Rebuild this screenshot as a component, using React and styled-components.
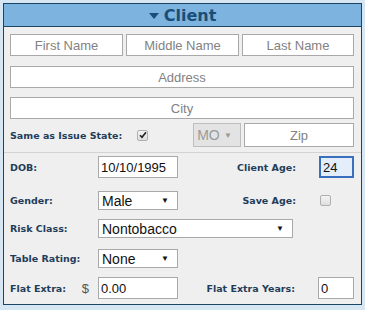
import React from "react";
import styled, { createGlobalStyle } from "styled-components";

const GlobalStyle = createGlobalStyle`
  html, body {
    margin: 0;
    padding: 0;
    background: #d7e6f3;
  }
  * {
    box-sizing: border-box;
  }
`;

function App() {
  return (
    <Page>
      <GlobalStyle />
      <Panel>
        <Header>
          <svg width="10" height="6" viewBox="0 0 10 6">
            <polygon points="0,0 10,0 5,6" fill="#1a4e78" />
          </svg>
          <span>Client</span>
        </Header>

        <TopSection>
          <NameRow>
            <TextBox placeholder="First Name" $center />
            <TextBox placeholder="Middle Name" $center />
            <TextBox placeholder="Last Name" $center />
          </NameRow>
          <TextBox placeholder="Address" $center $top={10} />
          <TextBox placeholder="City" $center $top={9} />
          <StateRow>
            <Label>Same as Issue State:</Label>
            <CheckBox $checked $left={15}>
              <svg width="8" height="8" viewBox="0 0 8 8">
                <path d="M1 4.2 L3 6.3 L7 1.3" stroke="#222" strokeWidth="1.6" fill="none" />
              </svg>
            </CheckBox>
            <SelectBox $width={48} $disabled $left={45}>
              <span>MO</span>
              <Arrow $disabled>▼</Arrow>
            </SelectBox>
            <TextBox placeholder="Zip" $center $width={110} $left={3} $height={24} />
          </StateRow>
        </TopSection>

        <BottomSection>
          <FieldRow $top={3}>
            <FieldLabel>DOB:</FieldLabel>
            <TextBox defaultValue="10/10/1995" $width={80} $value />
            <RightLabel>Client Age:</RightLabel>
            <TextBox defaultValue="24" $width={35} $value $focused />
          </FieldRow>
          <FieldRow $top={13}>
            <FieldLabel>Gender:</FieldLabel>
            <SelectBox $width={80}>
              <span>Male</span>
              <Arrow>▼</Arrow>
            </SelectBox>
            <RightLabel>Save Age:</RightLabel>
            <FieldSlot>
              <CheckBox $left={1} />
            </FieldSlot>
          </FieldRow>
          <FieldRow $top={9}>
            <FieldLabel>Risk Class:</FieldLabel>
            <SelectBox $width={195}>
              <span>Nontobacco</span>
              <Arrow>▼</Arrow>
            </SelectBox>
          </FieldRow>
          <FieldRow $top={11}>
            <FieldLabel>Table Rating:</FieldLabel>
            <SelectBox $width={80}>
              <span>None</span>
              <Arrow>▼</Arrow>
            </SelectBox>
          </FieldRow>
          <FieldRow $top={9}>
            <FieldLabel>
              Flat Extra:
              <Dollar>$</Dollar>
            </FieldLabel>
            <TextBox defaultValue="0.00" $width={80} $value />
            <RightLabel>Flat Extra Years:</RightLabel>
            <TextBox defaultValue="0" $width={36} $value />
          </FieldRow>
        </BottomSection>
      </Panel>
    </Page>
  );
}

const Page = styled.div`
  width: 365px;
  height: 310px;
  padding: 3px 0 0 3px;
`;

const Panel = styled.div`
  width: 359px;
  height: 302px;
  border: 1px solid #1b4565;
  background: #efefef;
`;

const Header = styled.div`
  display: flex;
  justify-content: center;
  align-items: center;
  gap: 5px;
  height: 23px;
  background: #7db3df;
  border-bottom: 1px solid #1b4565;
  font-family: "DejaVu Sans", Verdana, sans-serif;
  font-weight: bold;
  font-size: 16px;
  color: #1a4e78;

  svg {
    margin-top: 1px;
  }
`;

const TopSection = styled.div`
  display: flex;
  flex-direction: column;
  padding: 7px 7px 5px 6px;
`;

const NameRow = styled.div`
  display: grid;
  grid-template-columns: 113px 113px 112px;
  justify-content: space-between;
`;

const StateRow = styled.div`
  display: flex;
  align-items: center;
  margin-top: 4px;
`;

const BottomSection = styled.div`
  border-top: 1px solid #d3d3d3;
  padding: 0 7px 0 6px;
`;

const FieldRow = styled.div`
  display: flex;
  align-items: center;
  margin-top: ${(p) => p.$top}px;
`;

const Label = styled.span`
  font-family: "DejaVu Sans", Verdana, sans-serif;
  font-weight: bold;
  font-size: 9.5px;
  color: #1f3d5a;
  white-space: nowrap;
`;

const FieldLabel = styled(Label)`
  display: flex;
  align-items: center;
  width: 88px;
`;

const RightLabel = styled(Label)`
  margin-left: auto;
  margin-right: 23px;
  text-align: right;
`;

const Dollar = styled.span`
  margin-left: auto;
  margin-right: 9px;
  font-family: "Liberation Sans", Arial, sans-serif;
  font-weight: normal;
  font-size: 13px;
  color: #555;
`;

const FieldSlot = styled.div`
  width: 35px;
  display: flex;
`;

const TextBox = styled.input`
  display: block;
  width: ${(p) => (p.$width ? `${p.$width}px` : "100%")};
  height: ${(p) => p.$height || 22}px;
  margin-top: ${(p) => p.$top || 0}px;
  margin-left: ${(p) => p.$left || 0}px;
  padding: 0 2px;
  border: ${(p) => (p.$focused ? "2px solid #3a6fbe" : "1px solid #a9a9a9")};
  background: ${(p) => (p.$focused ? "#e4eefa" : "#fff")};
  font-family: "Liberation Sans", Arial, sans-serif;
  font-size: 13px;
  color: #111;
  text-align: ${(p) => (p.$center ? "center" : "left")};
  outline: none;

  &::placeholder {
    color: #828282;
  }
`;

const SelectBox = styled.div`
  display: flex;
  align-items: center;
  justify-content: space-between;
  width: ${(p) => p.$width}px;
  height: ${(p) => (p.$disabled ? 24 : 19)}px;
  margin-left: ${(p) => p.$left || 0}px;
  padding: 0 8px 0 3px;
  border: 1px solid ${(p) => (p.$disabled ? "#bdbdbd" : "#a9a9a9")};
  background: ${(p) => (p.$disabled ? "#e3e3e3" : "#fff")};
  font-family: "Liberation Sans", Arial, sans-serif;
  font-size: 14px;
  color: ${(p) => (p.$disabled ? "#9a9a9a" : "#111")};
`;

const Arrow = styled.span`
  font-size: 8px;
  color: ${(p) => (p.$disabled ? "#999" : "#111")};
`;

const CheckBox = styled.span`
  display: flex;
  align-items: center;
  justify-content: center;
  width: 11px;
  height: 11px;
  margin-left: ${(p) => p.$left || 0}px;
  border: 1px solid #b0b0b0;
  border-radius: 2px;
  background: linear-gradient(#f4f4f4, #dedede);
`;

export default App;
